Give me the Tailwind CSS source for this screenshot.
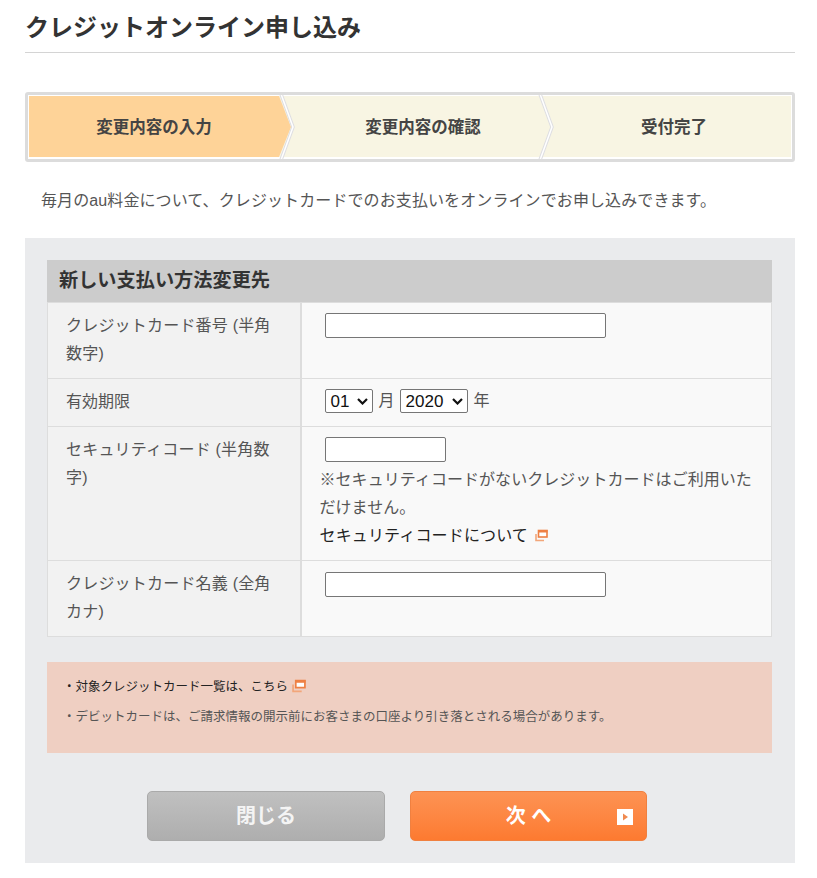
<!DOCTYPE html>
<html lang="ja">
<head>
    <meta charset="UTF-8">
    <meta name="viewport" content="width=device-width, initial-scale=1.0">
    <title>クレジットオンライン申し込み</title>
    <script src="https://cdn.jsdelivr.net/npm/@tailwindcss/browser@4"></script>
</head>
<body class="bg-white text-[#555] font-['Liberation_Sans','Noto_Sans_CJK_JP',sans-serif]">
    <div class="w-[817px] h-[878px] overflow-hidden pl-[25px] pr-[22px]">
        <h1 class="h-[53px] pt-[11px] border-b border-[#d4d4d4] text-[24px] leading-[34px] font-bold text-[#333]">クレジットオンライン申し込み</h1>

        <!-- steps -->
        <div class="relative mt-[39px] h-[70px] border-[3px] border-[#dcdcdc] rounded-[3px] bg-white">
            <svg class="absolute top-0 left-0" width="764" height="64" viewBox="0 0 764 64">
                <rect x="1" y="1" width="762" height="61" fill="#f8f5e3"/>
                <polygon points="1,1 251,1 263,32 251,62 1,62" fill="#fed398"/>
                <polyline points="253,-1 265,32 253,65" fill="none" stroke="#dedee2" stroke-width="3.5"/>
                <polyline points="253,-1 265,32 253,65" fill="none" stroke="#ffffff" stroke-width="1.5"/>
                <polyline points="512,-1 524,32 512,65" fill="none" stroke="#dedee2" stroke-width="3.5"/>
                <polyline points="512,-1 524,32 512,65" fill="none" stroke="#ffffff" stroke-width="1.5"/>
            </svg>
            <div class="relative flex h-full items-center text-[16.5px] font-bold text-[#444]">
                <div class="w-[252px] text-center">変更内容の入力</div>
                <div class="w-[286px] text-center">変更内容の確認</div>
                <div class="flex-1 text-center pr-[10px]">受付完了</div>
            </div>
        </div>

        <p class="mt-[25px] pl-[16px] text-[16px] leading-[28px] tracking-[0.1px]">毎月のau料金について、クレジットカードでのお支払いをオンラインでお申し込みできます。</p>

        <!-- form panel -->
        <div class="mt-[23px] h-[625px] bg-[#eaebed] pl-[22px] pr-[23px] pt-[22px]">
            <h2 class="h-[42px] bg-[#cccccc] pl-[12px] text-[19.2px] leading-[42px] font-bold text-[#333]">新しい支払い方法変更先</h2>
            <table class="w-[725px] table-fixed border-collapse text-[16px] leading-[28px]">
                <tbody>
                    <tr class="h-[76px]">
                        <th class="w-[253px] align-top bg-[#f2f2f2] border border-[#dddddd] border-r-2 pt-[9px] pl-[18px] pr-[20px] text-left font-normal tracking-[0.2px]">クレジットカード番号 (半角数字)</th>
                        <td class="align-top bg-[#f9f9f9] border border-[#dddddd] pt-[10px] pl-[18px] pr-[18px]">
                            <input type="text" class="block ml-[5px] w-[281px] h-[25px] bg-white border border-[#767676] rounded-[2px]">
                        </td>
                    </tr>
                    <tr class="h-[48px]">
                        <th class="align-top bg-[#f2f2f2] border border-[#dddddd] border-r-2 pt-[9px] pl-[18px] text-left font-normal">有効期限</th>
                        <td class="align-top bg-[#f9f9f9] border border-[#dddddd] pt-[10px] pl-[18px]">
                            <div class="flex items-center ml-[5px] h-[24px]">
                                <div class="relative w-[48px] h-[24px] bg-white border border-[#767676] rounded-[2px] pl-[5px] text-[17px] text-[#111] leading-[23px]">01
                                    <svg class="absolute right-[4px] top-[8px]" width="11" height="7" viewBox="0 0 11 7"><path d="M1 1l4.5 4.5L10 1" fill="none" stroke="#111" stroke-width="2.2"/></svg>
                                </div>
                                <span class="ml-[6px]">月</span>
                                <div class="relative ml-[5px] w-[68px] h-[24px] bg-white border border-[#767676] rounded-[2px] pl-[5px] text-[17px] text-[#111] leading-[23px]">2020
                                    <svg class="absolute right-[4px] top-[8px]" width="11" height="7" viewBox="0 0 11 7"><path d="M1 1l4.5 4.5L10 1" fill="none" stroke="#111" stroke-width="2.2"/></svg>
                                </div>
                                <span class="ml-[6px]">年</span>
                            </div>
                        </td>
                    </tr>
                    <tr class="h-[134px]">
                        <th class="align-top bg-[#f2f2f2] border border-[#dddddd] border-r-2 pt-[9px] pl-[18px] pr-[20px] text-left font-normal tracking-[0.2px]">セキュリティコード (半角数字)</th>
                        <td class="align-top bg-[#f9f9f9] border border-[#dddddd] pt-[10px] pl-[18px] pr-[18px]">
                            <input type="text" class="block ml-[5px] w-[121px] h-[25px] bg-white border border-[#767676] rounded-[2px]">
                            <p class="mt-[4px] tracking-[0.05px]">※セキュリティコードがないクレジットカードはご利用いただけません。</p>
                            <p class="flex items-center text-[#222] tracking-[0.15px]">セキュリティコードについて
                                <svg class="ml-[7px] -mt-[1px]" width="13" height="13" viewBox="0 0 13 13"><rect x="3.5" y="1.5" width="8.5" height="6.5" fill="#fff" stroke="#ee8044" stroke-width="1.6"/><rect x="3" y="1" width="9.5" height="2.5" fill="#ee8044"/><path d="M1 5v6.5h8" fill="none" stroke="#f2a67a" stroke-width="1.6"/></svg>
                            </p>
                        </td>
                    </tr>
                    <tr class="h-[76px]">
                        <th class="align-top bg-[#f2f2f2] border border-[#dddddd] border-r-2 pt-[9px] pl-[18px] pr-[20px] text-left font-normal tracking-[0.2px]">クレジットカード名義 (全角カナ)</th>
                        <td class="align-top bg-[#f9f9f9] border border-[#dddddd] pt-[11px] pl-[18px] pr-[18px]">
                            <input type="text" class="block ml-[5px] w-[281px] h-[25px] bg-white border border-[#767676] rounded-[2px]">
                        </td>
                    </tr>
                </tbody>
            </table>

            <!-- notes -->
            <div class="mt-[25px] h-[91px] bg-[#efcfc2] pt-[10px] pl-[16px] text-[12.5px] leading-[30px]">
                <p class="flex items-center text-[#222]">・対象クレジットカード一覧は、こちら
                    <svg class="ml-[4px] -mt-[3px]" width="14" height="14" viewBox="0 0 13 13"><rect x="3.5" y="1.5" width="8.5" height="6.5" fill="#fff" stroke="#ee8044" stroke-width="1.6"/><rect x="3" y="1" width="9.5" height="2.5" fill="#ee8044"/><path d="M1 5v6.5h8" fill="none" stroke="#f2a67a" stroke-width="1.6"/></svg>
                </p>
                <p>・デビットカードは、ご請求情報の開示前にお客さまの口座より引き落とされる場合があります。</p>
            </div>

            <!-- buttons -->
            <div class="mt-[38px] ml-[100px] flex gap-[25px]">
                <button class="w-[238px] h-[50px] rounded-[5px] border border-[#aaaaaa] bg-gradient-to-b from-[#c0c0c0] to-[#aeaeae] text-[20px] font-bold text-[#f4f4f4]">閉じる</button>
                <button class="relative w-[237px] h-[50px] rounded-[5px] border border-[#f08040] bg-gradient-to-b from-[#fd9353] to-[#fd7a30] text-[20px] font-bold text-white">次 へ
                    <svg class="absolute right-[13px] top-[17px]" width="16" height="16" viewBox="0 0 16 16"><rect width="16" height="16" fill="#fff"/><path d="M6 4.5l5 3.5-5 3.5z" fill="#f08a50"/></svg>
                </button>
            </div>
        </div>
    </div>
</body>
</html>
